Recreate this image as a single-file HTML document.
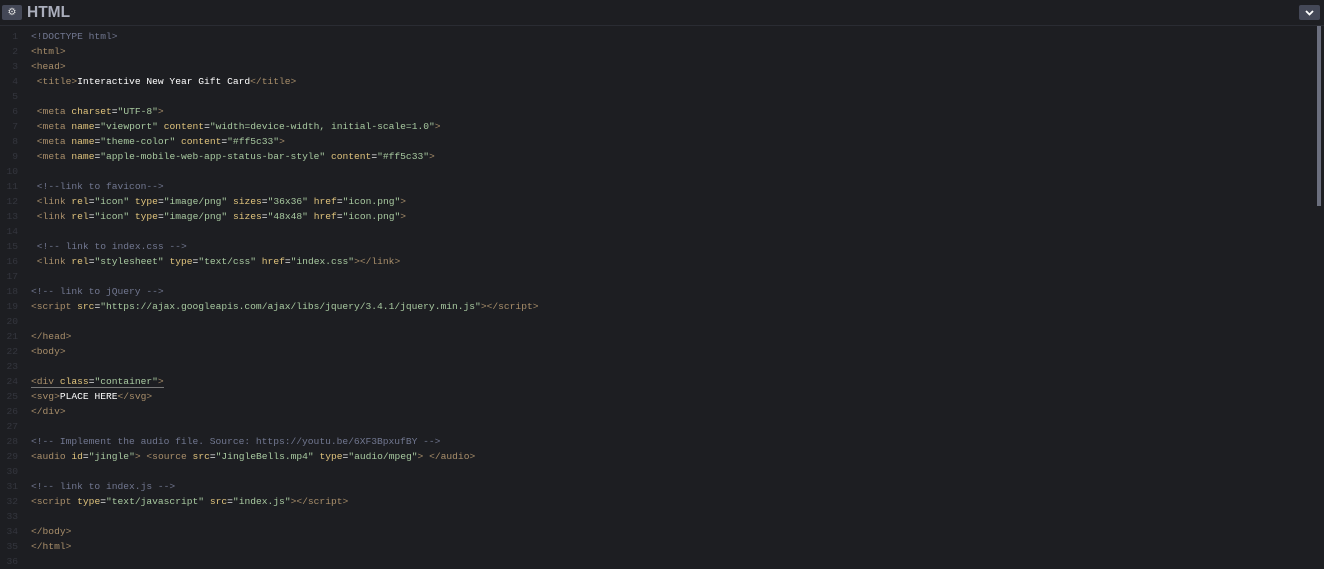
<!DOCTYPE html>
<html><head><style>
body{margin:0;width:1324px;height:568px;background:#1d1e22;overflow:hidden;font-family:"Liberation Sans",sans-serif}
.hdr{position:absolute;left:0;top:0;width:1324px;height:25px;background:#1d1e22;border-bottom:1px solid #2a2c33}
.gear{position:absolute;left:2px;top:5px;width:20px;height:15px;background:#444857;border-radius:2px;color:#ddd;font-size:10px;text-align:center;line-height:15px}
.title{position:absolute;left:27px;top:4px;font-size:15.5px;font-weight:bold;color:#aaaebc}
.dd{position:absolute;left:1299px;top:5px;width:21px;height:15px;background:#444857;border-radius:2px}
.code{position:absolute;left:0;top:29px;font-family:"Liberation Mono",monospace;font-size:9.62px;line-height:15px;color:#fff;white-space:pre}
.ln{display:inline-block;width:18px;text-align:right;color:#34363e;margin-right:13px}
.t{color:#a88e6a}.a{color:#dfc37c}.s{color:#a8c9a0}.c{color:#717790}.w{color:#fff}
.sb{position:absolute;left:1317px;top:26px;width:4px;height:180px;background:#6b6f7e}
</style></head><body>
<div class="hdr"><div class="gear">⚙</div><div class="title">HTML</div>
<div class="dd"><svg width="21" height="15"><path d="M7 6l3.5 3.5L14 6" stroke="#fff" stroke-width="1.8" fill="none"/></svg></div></div>
<div class="sb"></div>
<div class="code"><span class="ln">1</span><span class="c">&lt;!DOCTYPE html&gt;</span>
<span class="ln">2</span><span class="t">&lt;html&gt;</span>
<span class="ln">3</span><span class="t">&lt;head&gt;</span>
<span class="ln">4</span> <span class="t">&lt;title&gt;</span>Interactive New Year Gift Card<span class="t">&lt;/title&gt;</span>
<span class="ln">5</span>
<span class="ln">6</span> <span class="t">&lt;meta </span><span class="a">charset</span>=<span class="s">"UTF-8"</span><span class="t">&gt;</span>
<span class="ln">7</span> <span class="t">&lt;meta </span><span class="a">name</span>=<span class="s">"viewport"</span> <span class="a">content</span>=<span class="s">"width=device-width, initial-scale=1.0"</span><span class="t">&gt;</span>
<span class="ln">8</span> <span class="t">&lt;meta </span><span class="a">name</span>=<span class="s">"theme-color"</span> <span class="a">content</span>=<span class="s">"#ff5c33"</span><span class="t">&gt;</span>
<span class="ln">9</span> <span class="t">&lt;meta </span><span class="a">name</span>=<span class="s">"apple-mobile-web-app-status-bar-style"</span> <span class="a">content</span>=<span class="s">"#ff5c33"</span><span class="t">&gt;</span>
<span class="ln">10</span>
<span class="ln">11</span> <span class="c">&lt;!--link to favicon--&gt;</span>
<span class="ln">12</span> <span class="t">&lt;link </span><span class="a">rel</span>=<span class="s">"icon"</span> <span class="a">type</span>=<span class="s">"image/png"</span> <span class="a">sizes</span>=<span class="s">"36x36"</span> <span class="a">href</span>=<span class="s">"icon.png"</span><span class="t">&gt;</span>
<span class="ln">13</span> <span class="t">&lt;link </span><span class="a">rel</span>=<span class="s">"icon"</span> <span class="a">type</span>=<span class="s">"image/png"</span> <span class="a">sizes</span>=<span class="s">"48x48"</span> <span class="a">href</span>=<span class="s">"icon.png"</span><span class="t">&gt;</span>
<span class="ln">14</span>
<span class="ln">15</span> <span class="c">&lt;!-- link to index.css --&gt;</span>
<span class="ln">16</span> <span class="t">&lt;link </span><span class="a">rel</span>=<span class="s">"stylesheet"</span> <span class="a">type</span>=<span class="s">"text/css"</span> <span class="a">href</span>=<span class="s">"index.css"</span><span class="t">&gt;&lt;/link&gt;</span>
<span class="ln">17</span>
<span class="ln">18</span><span class="c">&lt;!-- link to jQuery --&gt;</span>
<span class="ln">19</span><span class="t">&lt;script </span><span class="a">src</span>=<span class="s">"https://ajax.googleapis.com/ajax/libs/jquery/3.4.1/jquery.min.js"</span><span class="t">&gt;&lt;/script&gt;</span>
<span class="ln">20</span>
<span class="ln">21</span><span class="t">&lt;/head&gt;</span>
<span class="ln">22</span><span class="t">&lt;body&gt;</span>
<span class="ln">23</span>
<span class="ln">24</span><span style="border-bottom:1px solid #777"><span class="t">&lt;div </span><span class="a">class</span>=<span class="s">"container"</span><span class="t">&gt;</span></span>
<span class="ln">25</span><span class="t">&lt;svg&gt;</span>PLACE HERE<span class="t">&lt;/svg&gt;</span>
<span class="ln">26</span><span class="t">&lt;/div&gt;</span>
<span class="ln">27</span>
<span class="ln">28</span><span class="c">&lt;!-- Implement the audio file. Source: https://youtu.be/6XF3BpxufBY --&gt;</span>
<span class="ln">29</span><span class="t">&lt;audio </span><span class="a">id</span>=<span class="s">"jingle"</span><span class="t">&gt;</span> <span class="t">&lt;source </span><span class="a">src</span>=<span class="s">"JingleBells.mp4"</span> <span class="a">type</span>=<span class="s">"audio/mpeg"</span><span class="t">&gt;</span> <span class="t">&lt;/audio&gt;</span>
<span class="ln">30</span>
<span class="ln">31</span><span class="c">&lt;!-- link to index.js --&gt;</span>
<span class="ln">32</span><span class="t">&lt;script </span><span class="a">type</span>=<span class="s">"text/javascript"</span> <span class="a">src</span>=<span class="s">"index.js"</span><span class="t">&gt;&lt;/script&gt;</span>
<span class="ln">33</span>
<span class="ln">34</span><span class="t">&lt;/body&gt;</span>
<span class="ln">35</span><span class="t">&lt;/html&gt;</span>
<span class="ln">36</span></div>
</body></html>
